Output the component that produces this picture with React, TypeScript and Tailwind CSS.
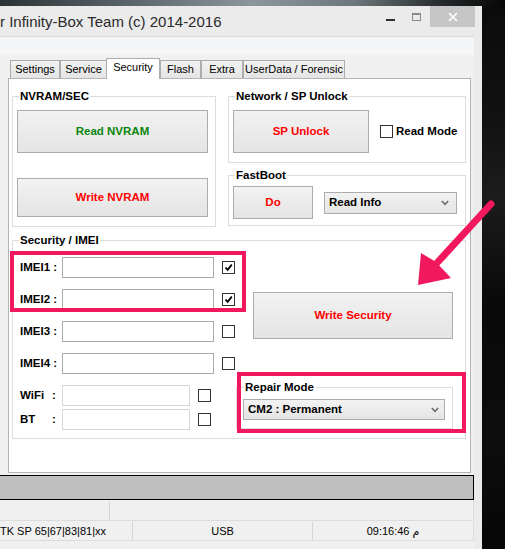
import type { ReactNode } from 'react';

const btn =
  'flex items-center justify-center border border-[#acacac] bg-[linear-gradient(180deg,#f2f2f2,#e4e4e4)] font-bold text-[11.5px]';

function Group({
  title,
  className,
  titleClass = 'ml-[6px]',
  children,
}: {
  title: string;
  className: string;
  titleClass?: string;
  children: ReactNode;
}) {
  return (
    <div className={`border border-[#dcdcdc] ${className}`}>
      <div
        className={`-mt-[8px] ${titleClass} w-fit bg-white px-[1px] h-[14px] leading-[14px] font-bold text-[11.5px] text-black`}
      >
        {title}
      </div>
      {children}
    </div>
  );
}

function Check({ checked = false }: { checked?: boolean }) {
  return (
    <div className="w-[13px] h-[13px] shrink-0 border border-[#333] bg-white">
      {checked && (
        <svg width="11" height="11" viewBox="0 0 11 11">
          <path d="M2.5 5.5 L4.6 7.8 L8.8 2.6" fill="none" stroke="#000" strokeWidth="1.8" />
        </svg>
      )}
    </div>
  );
}

function Chevron() {
  return (
    <svg width="8" height="6" viewBox="0 0 8 6" className="shrink-0">
      <path d="M0.8 1 L4 4.4 L7.2 1" fill="none" stroke="#6d6d6d" strokeWidth="1.6" />
    </svg>
  );
}

function Select({ value, className }: { value: string; className: string }) {
  return (
    <div
      className={`flex items-center justify-between border border-[#acacac] bg-[linear-gradient(180deg,#f2f2f2,#e5e5e5)] font-bold text-[11.5px] text-black ${className}`}
    >
      <span>{value}</span>
      <Chevron />
    </div>
  );
}

function ImeiRow({ label, checked }: { label: string; checked?: boolean }) {
  return (
    <div className="flex items-center h-[21px]">
      <span className="w-[42px] font-bold text-[11.5px] text-black">{label}</span>
      <div className="w-[152px] h-[21px] border border-[#ababab] bg-white" />
      <div className="ml-[8px]">
        <Check checked={checked} />
      </div>
    </div>
  );
}

function SmallRow({ label }: { label: string }) {
  return (
    <div className="flex items-center h-[21px]">
      <span className="w-[42px] flex font-bold text-[11.5px] text-black">
        <span className="w-[32px]">{label}</span>
        <span>:</span>
      </span>
      <div className="w-[128px] h-[21px] border border-[#d6d6d6] bg-white" />
      <div className="ml-[8px]">
        <Check />
      </div>
    </div>
  );
}

const tabs = [
  { name: 'Settings', w: 'w-[50px]' },
  { name: 'Service', w: 'w-[47px]' },
  { name: 'Security', w: 'w-[54px]', active: true },
  { name: 'Flash', w: 'w-[41px]' },
  { name: 'Extra', w: 'w-[42px]' },
  { name: 'UserData / Forensic', w: 'w-[102px]' },
];

export default function App() {
  return (
    <div className="relative w-[505px] h-[549px] overflow-hidden bg-[#050505] font-['Liberation_Sans',Arial,'DejaVu_Sans',sans-serif] text-black">
      <div className="h-[6px] bg-[linear-gradient(90deg,#2c3336,#596469_25%,#8b979b_50%,#6d787c_70%,#23282a_88%,#070707)]" />

      <div className="flex">
        <div className="w-[482px] h-[543px] bg-[#ebebeb] flex flex-col">
          {/* title bar */}
          <div className="h-[30px] flex">
            <div className="flex-1 flex items-center pt-[2px] text-[15px] text-[#2a2a2a] whitespace-nowrap">
              r Infinity-Box Team (c) 2014-2016
            </div>
            <div className="flex items-start">
              <div className="w-[26px] h-[21px] pt-[13px] flex justify-center">
                <div className="w-[9px] h-[2px] bg-[#2e2e2e]" />
              </div>
              <div className="w-[27px] h-[21px] pt-[7px] flex justify-center">
                <div className="w-[9px] h-[8px] border border-t-2 border-[#8a8a8a]" />
              </div>
              <div className="w-[45px] h-[21px] bg-[#c6c6c6] flex items-center justify-center">
                <svg width="10" height="10" viewBox="0 0 10 10">
                  <path d="M1 1 L9 9 M9 1 L1 9" stroke="#fff" strokeWidth="1.6" />
                </svg>
              </div>
              <div className="w-[7px]" />
            </div>
          </div>

          <div className="flex flex-1">
            <div className="w-[474px] flex flex-col">
              <div className="h-[19px] border-t border-[#dadada] bg-[#f4f5f7]" />

              {/* main area */}
              <div className="h-[420px] bg-[#f0f0f0] pt-[3px]">
                <div className="flex items-end h-[20px] pl-[10px]">
                  {tabs.map((t) =>
                    t.active ? (
                      <div
                        key={t.name}
                        className={`${t.w} -ml-px h-[21px] -mb-px relative z-10 bg-white border border-b-0 border-[#acacac] flex items-center justify-center pb-[3px] text-[11px]`}
                      >
                        {t.name}
                      </div>
                    ) : (
                      <div
                        key={t.name}
                        className={`${t.w} h-[18px] border border-b-0 border-[#acacac] bg-[linear-gradient(180deg,#f2f2f2,#e4e4e4)] flex items-center justify-center text-[11px] whitespace-nowrap`}
                      >
                        {t.name}
                      </div>
                    ),
                  )}
                </div>

                <div className="ml-[8px] w-[463px] h-[395px] border border-[#b4b4b4] bg-white pt-[17px] pl-[3px]">
                  <div className="flex gap-[12px]">
                    <Group title="NVRAM/SEC" className="w-[204px] h-[131px]">
                      <div className={`${btn} mt-[7px] ml-[4px] w-[191px] h-[43px] text-[#0a870a]`}>
                        Read NVRAM
                      </div>
                      <div className={`${btn} mt-[25px] ml-[4px] w-[191px] h-[39px] text-[#ff0000]`}>
                        Write NVRAM
                      </div>
                    </Group>

                    <div className="w-[238px] flex flex-col">
                      <Group title="Network / SP Unlock" className="h-[67px]">
                        <div className="mt-[7px] ml-[4px] flex items-center">
                          <div className={`${btn} w-[136px] h-[43px] text-[#ff0000]`}>SP Unlock</div>
                          <div className="ml-[11px]">
                            <Check />
                          </div>
                          <span className="ml-[3px] font-bold text-[11.5px]">Read Mode</span>
                        </div>
                      </Group>
                      <Group title="FastBoot" className="mt-[12px] h-[51px]">
                        <div className="mt-[4px] ml-[4px] flex items-center">
                          <div className={`${btn} w-[80px] h-[33px] text-[#ff0000]`}>Do</div>
                          <Select value="Read Info" className="ml-[11px] w-[133px] h-[22px] pl-[4px] pr-[7px]" />
                        </div>
                      </Group>
                    </div>
                  </div>

                  <Group title="Security / IMEI" className="mt-[13px] w-[454px] h-[199px]">
                    <div className="flex">
                      <div className="pl-[7px] pt-[10px] flex flex-col">
                        <ImeiRow label="IMEI1 :" checked />
                        <div className="mt-[11px]">
                          <ImeiRow label="IMEI2 :" checked />
                        </div>
                        <div className="mt-[11px]">
                          <ImeiRow label="IMEI3 :" />
                        </div>
                        <div className="mt-[11px]">
                          <ImeiRow label="IMEI4 :" />
                        </div>
                        <div className="mt-[11px]">
                          <SmallRow label="WiFi" />
                        </div>
                        <div className="mt-[3px]">
                          <SmallRow label="BT" />
                        </div>
                      </div>

                      <div className="ml-[1px] flex flex-col">
                        <div className={`${btn} mt-[45px] ml-[17px] w-[200px] h-[47px] text-[#ff0000]`}>
                          Write Security
                        </div>
                        <Group title="Repair Mode" titleClass="ml-[7px]" className="mt-[48px] w-[217px] h-[42px]">
                          <Select
                            value="CM2 : Permanent"
                            className="mt-[5px] ml-[6px] w-[202px] h-[21px] pl-[4px] pr-[5px]"
                          />
                        </Group>
                      </div>
                    </div>
                  </Group>
                </div>
              </div>

              {/* progress */}
              <div className="-ml-[2px] w-[476px] h-[25px] border border-black bg-[#bfbfbf]" />

              {/* status bar */}
              <div className="flex-1 bg-[#f0f0f0] text-[11px]">
                <div className="mt-[1px] h-[20px] flex border-b border-[#dcdcdc]">
                  <div className="w-[110px] border-r border-[#d6d6d6]" />
                  <div className="flex-1 border-r border-[#dcdcdc]" />
                </div>
                <div className="mt-[1px] h-[19px] flex border-b border-[#dcdcdc]">
                  <div className="w-[133px] border-r border-[#d6d6d6] flex items-center whitespace-nowrap">
                    TK SP 65|67|83|81|xx
                  </div>
                  <div className="w-[180px] border-r border-[#d6d6d6] flex items-center justify-center">USB</div>
                  <div className="flex-1 border-r border-[#dcdcdc] flex items-center justify-center">
                    09:16:46 م
                  </div>
                </div>
              </div>
            </div>
          </div>
        </div>

        <div className="flex-1 h-[543px] bg-[linear-gradient(180deg,#0b0b0b,#111_20%,#1c1c1c_35%,#090909_55%,#0d0d0d_80%,#060606)]" />
      </div>

      {/* annotations */}
      <div className="absolute left-[10px] top-[251px] w-[236px] h-[61px] border-4 border-[#f2185e]" />
      <div className="absolute left-[237px] top-[372px] w-[229px] h-[61px] border-4 border-[#f2185e]" />
      <svg className="absolute left-0 top-0" width="505" height="549" viewBox="0 0 505 549">
        <path d="M491 204 L436 264" stroke="#f2185e" strokeWidth="7" strokeLinecap="round" />
        <path d="M418 285 L421 253 L436 262 L451 278 Z" fill="#f2185e" />
      </svg>
    </div>
  );
}
